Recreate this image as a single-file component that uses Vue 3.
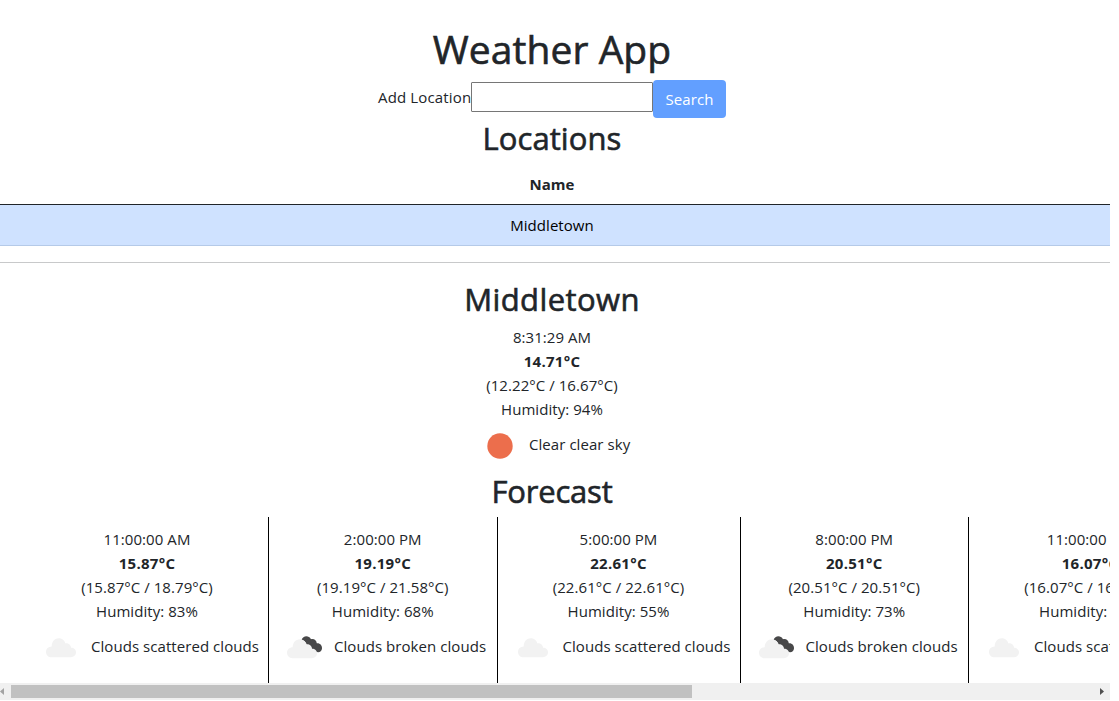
<script setup>
const forecasts = [
  { time: '11:00:00 AM', temp: '15.87°C', range: '(15.87°C / 18.79°C)', humidity: '83%', text: 'Clouds scattered clouds', broken: false },
  { time: '2:00:00 PM', temp: '19.19°C', range: '(19.19°C / 21.58°C)', humidity: '68%', text: 'Clouds broken clouds', broken: true },
  { time: '5:00:00 PM', temp: '22.61°C', range: '(22.61°C / 22.61°C)', humidity: '55%', text: 'Clouds scattered clouds', broken: false },
  { time: '8:00:00 PM', temp: '20.51°C', range: '(20.51°C / 20.51°C)', humidity: '73%', text: 'Clouds broken clouds', broken: true },
  { time: '11:00:00 PM', temp: '16.07°C', range: '(16.07°C / 16.07°C)', humidity: '80%', text: 'Clouds scattered clouds', broken: false },
]
</script>

<template>
  <div class="page">
    <h1>Weather App</h1>
    <div class="search">
      <label for="loc">Add Location</label>
      <input id="loc" type="text" />
      <button>Search</button>
    </div>
    <h2 class="h-loc">Locations</h2>
    <div class="th">Name</div>
    <div class="td">Middletown</div>
    <hr />
    <h2 class="h-mid">Middletown</h2>
    <div class="weather">
      <div>8:31:29 AM</div>
      <div class="strong">14.71°C</div>
      <div>(12.22°C / 16.67°C)</div>
      <div>Humidity: 94%</div>
      <div class="cond now">
        <svg width="50" height="50" viewBox="0 0 50 50"><circle cx="25" cy="25" r="12.7" fill="#ec6e4c" /></svg>
        <span>Clear clear sky</span>
      </div>
    </div>
    <h2 class="h-fore">Forecast</h2>
    <div class="cards">
      <div v-for="f in forecasts" :key="f.time" class="card" :class="{ narrow: f.broken }">
        <div>{{ f.time }}</div>
        <div class="strong">{{ f.temp }}</div>
        <div>{{ f.range }}</div>
        <div>Humidity: {{ f.humidity }}</div>
        <div class="cond">
          <svg v-if="f.broken" width="50" height="50" viewBox="0 0 50 50">
            <path d="M22.6 17C24 12.6 29.6 12 32 16.2C35 15.4 37.6 17.4 37.8 20.2C41 19.8 43.3 22.4 43 25.6C42.8 28.8 39.5 30.3 36.8 28.6C34 28.6 32.4 27 32.1 24.8C29.6 25 28 23.5 27.3 20.6C26.4 18.4 24.8 17.4 22.6 17Z" fill="#484849" />
            <path d="M13.5 35.2C10.3 35.2 8 32.8 8 29.8C8 26.7 10.5 24.3 13.7 24.3C13.6 19.9 16.8 16.3 20.8 16.3C24 16.3 26.6 18.5 27.4 21.4C30.4 21 33 23.2 33 25.8C36 25.8 38 27.8 38 30.3C38 33.1 35.8 35.2 33 35.2Z" fill="#f2f2f2" />
          </svg>
          <svg v-else width="50" height="50" viewBox="0 0 50 50">
            <path d="M15.5 34.2C12.3 34.2 10 31.8 10 28.9C10 25.9 12.5 23.8 15.7 23.6C15.6 18.8 18.8 15.3 22.8 15.3C26 15.3 28.6 17.5 29.4 20.4C32.4 20 35 22.2 35 24.8C38 24.8 40 26.8 40 29.3C40 32.1 37.8 34.2 35 34.2Z" fill="#f2f2f2" />
          </svg>
          <span>{{ f.text }}</span>
        </div>
      </div>
    </div>
    <div class="scrollbar">
      <svg width="11" height="17" viewBox="0 0 11 17"><path d="M0 8.5L4 5V12Z" fill="#a3a3a3" /></svg>
      <div class="track"><div class="thumb"></div></div>
      <svg width="17" height="17" viewBox="0 0 17 17"><path d="M7 5L11 8.5L7 12Z" fill="#505050" /></svg>
    </div>
  </div>
</template>

<style>
body { margin: 0; background: #fff; overflow: hidden; }
</style>
<style scoped>
* { box-sizing: border-box; }
.page {
  width: 1110px;
  height: 701px;
  padding-top: 25px;
  overflow: hidden;
  font: 400 15px/24px "Segoe UI", "Open Sans", "Noto Sans", sans-serif;
  letter-spacing: 0.06px;
  color: #212529;
}
h1, h2 { margin: 0; padding-right: 6px; text-align: center; font-weight: 500; white-space: nowrap; -webkit-text-stroke: 0.6px #212529; }
h1 { height: 55px; font-size: 39px; line-height: 48px; }
h2 { height: 46px; font-size: 31px; line-height: 41px; }
.h-mid { letter-spacing: 0.4px; }
.h-fore { letter-spacing: -0.2px; }
.search { display: flex; height: 38px; padding-left: 378px; }
label { width: 93px; padding-top: 5px; letter-spacing: 0.15px; white-space: nowrap; }
input { width: 182px; height: 30px; margin-top: 2px; border: 1px solid #767676; border-radius: 1px; background: #fff; }
button { width: 73px; height: 38px; padding: 0; border: 0; border-radius: 4px; background: #629fff; color: #fff; font: inherit; line-height: 39px; letter-spacing: 0.1px; }
.th { height: 41px; padding: 8px 6px 8px 0; border-bottom: 1px solid #212529; text-align: center; font-weight: 700; }
.td { height: 41px; padding: 8px 6px 8px 0; border-bottom: 1px solid #b5cae8; background: #cfe2ff; text-align: center; color: #000; }
hr { height: 1px; margin: 16px 0; border: 0; background: #c8c9ca; }
.weather { height: 146px; padding-right: 6px; text-align: center; }
.strong { font-weight: 700; letter-spacing: 0.3px; }
.cond { display: flex; gap: 5px; height: 50px; text-align: left; white-space: nowrap; }
.cond svg { flex: none; }
.cond span { padding-top: 11px; }
.now { padding-left: 475px; gap: 4px; }
.cards { display: flex; width: 1110px; height: 166px; padding-left: 26px; overflow: hidden; }
.card { flex: none; width: 243px; padding: 10px; border-right: 1px solid #000; text-align: center; }
.card.narrow { width: 228.5px; }
.scrollbar { display: flex; height: 17px; background: #f0f0f0; }
.track { flex: 1; padding: 2px 0; }
.thumb { width: 681px; height: 13px; background: #c1c1c1; }
</style>
